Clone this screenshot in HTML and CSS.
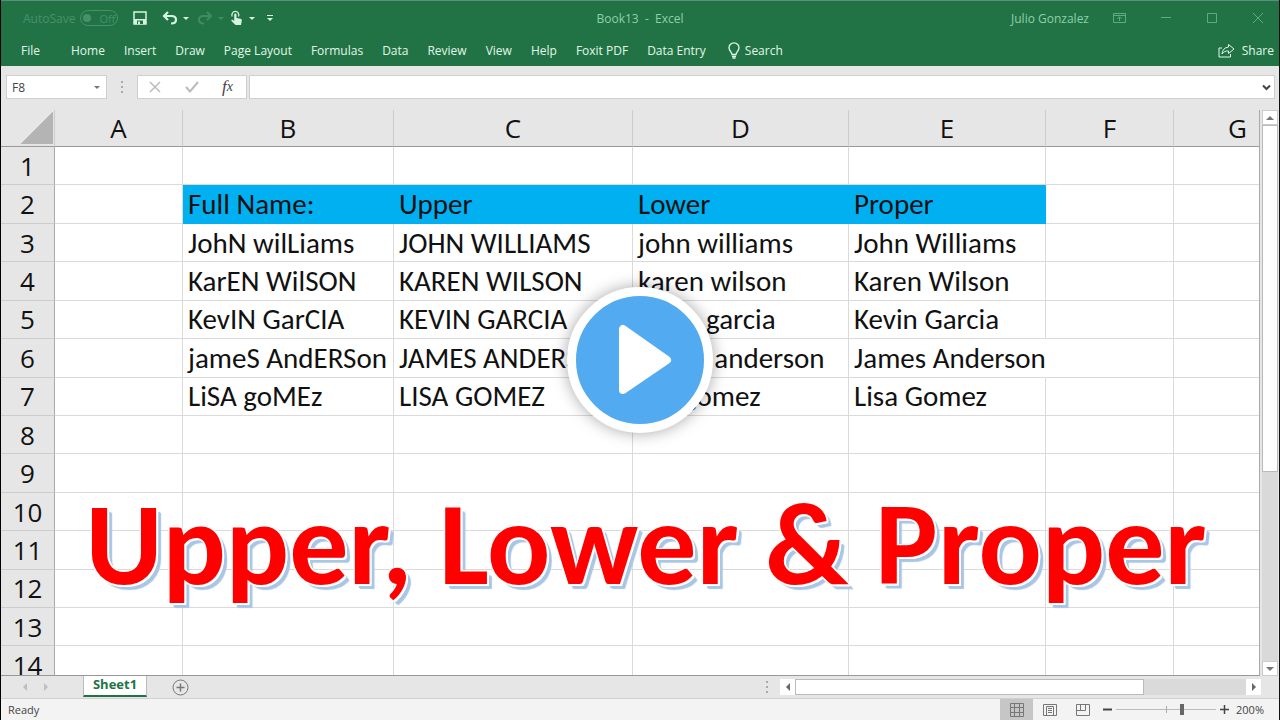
FILE: index.html
```html
<!DOCTYPE html>
<html lang="en">
<head>
  <meta charset="UTF-8" />
  <meta name="viewport" content="width=device-width, initial-scale=1.0"/>
  <title>Book13 - Excel</title>
  <link rel="stylesheet" href="styles.css">
</head>
<body>
  <div class="app">
    <header class="titlebar">
      <div class="quick-access">
        <label class="autosave">AutoSave
          <button class="switch" disabled><span class="knob"></span>Off</button>
        </label>
        <button class="save" aria-label="Save">
          <svg width="14" height="14" viewBox="0 0 14 14"><path d="M1 1h12v12H1z" fill="none" stroke="currentColor" stroke-width="1.500"/><path d="M1 8h12v5H1z" fill="currentColor"/><path d="M4 9.500h6V13H4z" fill="#217346"/><path d="M5 10.500h2V13H5z" fill="currentColor"/></svg>
        </button>
        <button class="undo" aria-label="Undo">
          <svg width="16" height="14" viewBox="0 0 16 14"><path d="M2 5h7.500c3 0 4.500 1.500 4.500 3.700S12.300 12.500 9 12.500" fill="none" stroke="currentColor" stroke-width="2.200"/><path d="M6 1 2 5l4 4" fill="none" stroke="currentColor" stroke-width="2.200"/></svg>
          <span class="caret"></span>
        </button>
        <button class="redo" aria-label="Redo" disabled>
          <svg width="16" height="14" viewBox="0 0 16 14"><path d="M14 5H6.500C3.500 5 2 6.500 2 8.700s1.700 3.800 5 3.800" fill="none" stroke="currentColor" stroke-width="2"/><path d="m10 1 4 4-4 4" fill="none" stroke="currentColor" stroke-width="2"/></svg>
          <span class="caret"></span>
        </button>
        <button class="touch" aria-label="Touch/Mouse Mode">
          <svg width="14" height="16" viewBox="0 0 14 16"><path d="M2.200 6.500a3.500 3.500 0 1 1 6.300 0" fill="none" stroke="currentColor" stroke-width="1.200"/><path d="M4.200 4.500c0-1.500 2.300-1.500 2.300 0V8l4 .8c1 .2 1.500.9 1.300 1.800l-.8 4.400H5.500L1.500 11c-.6-1 .6-1.700 1.400-1l1.300 1z" fill="currentColor"/></svg>
          <span class="caret"></span>
        </button>
        <button class="customize" aria-label="Customize Quick Access Toolbar"><span class="bar"></span><span class="caret"></span></button>
      </div>
      <h1 class="doc-title">Book13&nbsp; -&nbsp; Excel</h1>
      <div class="window-controls">
        <span class="user">Julio Gonzalez</span>
        <button aria-label="Ribbon Display Options">
          <svg width="13" height="12" viewBox="0 0 13 12"><path d="M.5 1.500h12v9H.5zM.5 3.500h12M6.500 9V5M4.500 6.800l2-2 2 2" fill="none" stroke="currentColor"/></svg>
        </button>
        <button aria-label="Minimize">
          <svg width="12" height="12" viewBox="0 0 12 12"><path d="M1 5.500h10" stroke="currentColor"/></svg>
        </button>
        <button aria-label="Maximize">
          <svg width="12" height="12" viewBox="0 0 12 12"><path d="M1.500 1.500h9v9h-9z" fill="none" stroke="currentColor"/></svg>
        </button>
        <button aria-label="Close">
          <svg width="12" height="12" viewBox="0 0 12 12"><path d="m1 1 10 10M11 1 1 11" stroke="currentColor"/></svg>
        </button>
      </div>
    </header>

    <nav class="ribbon">
      <button class="file">File</button>
      <button>Home</button>
      <button>Insert</button>
      <button>Draw</button>
      <button>Page Layout</button>
      <button>Formulas</button>
      <button>Data</button>
      <button>Review</button>
      <button>View</button>
      <button>Help</button>
      <button>Foxit PDF</button>
      <button>Data Entry</button>
      <button class="search">
        <svg width="12" height="17" viewBox="0 0 12 17"><path d="M4 12.500c0-2.500-3-3.500-3-6.700a5 5 0 0 1 10 0c0 3.200-3 4.200-3 6.700zM4 14.500h4M4.500 16.200h3" fill="none" stroke="currentColor" stroke-width="1.300"/></svg>
        Search
      </button>
      <button class="share">
        <svg width="17" height="15" viewBox="0 0 17 15"><path d="M4 5H1v9h11.500v-3" fill="none" stroke="currentColor"/><path d="M10.500 1.500 16 6l-5.500 4.500V8C7.500 7.800 5.500 8.800 4 11c.3-4 2.500-6.500 6.500-7z" fill="none" stroke="currentColor"/></svg>
        Share
      </button>
    </nav>

    <div class="formula-bar">
      <div class="name-box">
        <input type="text" value="F8" aria-label="Name Box" />
        <span class="caret"></span>
      </div>
      <span class="dots"></span>
      <div class="formula-buttons">
        <button class="muted" aria-label="Cancel">
          <svg width="12" height="12" viewBox="0 0 12 12"><path d="m1 1 10 10M11 1 1 11" stroke="currentColor" stroke-width="1.500"/></svg>
        </button>
        <button class="muted" aria-label="Enter">
          <svg width="14" height="12" viewBox="0 0 14 12"><path d="m1 6 4 4.500L13 1" fill="none" stroke="currentColor" stroke-width="2"/></svg>
        </button>
        <button class="fx" aria-label="Insert Function">f<sub>x</sub></button>
      </div>
      <div class="formula-input">
        <input type="text" aria-label="Formula Bar" />
        <svg width="9" height="7" viewBox="0 0 9 7"><path d="m1 1.500 3.500 3.500L8 1.500" fill="none" stroke="currentColor" stroke-width="2"/></svg>
      </div>
    </div>

    <main class="workspace">
      <div class="sheet">
        <table>
          <colgroup>
            <col class="col-num"><col class="col-a"><col class="col-b"><col class="col-c"><col class="col-d"><col class="col-e"><col class="col-f"><col class="col-g">
          </colgroup>
          <thead>
            <tr><th class="corner"></th><th>A</th><th>B</th><th>C</th><th>D</th><th>E</th><th>F</th><th>G</th></tr>
          </thead>
          <tbody>
            <tr><th>1</th><td></td><td></td><td></td><td></td><td></td><td></td><td></td></tr>
            <tr class="heading"><th>2</th><td></td><td>Full Name:</td><td>Upper</td><td>Lower</td><td>Proper</td><td></td><td></td></tr>
            <tr><th>3</th><td></td><td>JohN wilLiams</td><td>JOHN WILLIAMS</td><td>john williams</td><td>John Williams</td><td></td><td></td></tr>
            <tr><th>4</th><td></td><td>KarEN WilSON</td><td>KAREN WILSON</td><td>karen wilson</td><td>Karen Wilson</td><td></td><td></td></tr>
            <tr><th>5</th><td></td><td>KevIN GarCIA</td><td>KEVIN GARCIA</td><td>kevin garcia</td><td>Kevin Garcia</td><td></td><td></td></tr>
            <tr><th>6</th><td></td><td>jameS AndERSon</td><td>JAMES ANDERSON</td><td>james anderson</td><td class="spill">James Anderson</td><td></td><td></td></tr>
            <tr><th>7</th><td></td><td>LiSA goMEz</td><td>LISA GOMEZ</td><td>lisa gomez</td><td>Lisa Gomez</td><td></td><td></td></tr>
            <tr><th>8</th><td></td><td></td><td></td><td></td><td></td><td></td><td></td></tr>
            <tr><th>9</th><td></td><td></td><td></td><td></td><td></td><td></td><td></td></tr>
            <tr><th>10</th><td></td><td></td><td></td><td></td><td></td><td></td><td></td></tr>
            <tr><th>11</th><td></td><td></td><td></td><td></td><td></td><td></td><td></td></tr>
            <tr><th>12</th><td></td><td></td><td></td><td></td><td></td><td></td><td></td></tr>
            <tr><th>13</th><td></td><td></td><td></td><td></td><td></td><td></td><td></td></tr>
            <tr><th>14</th><td></td><td></td><td></td><td></td><td></td><td></td><td></td></tr>
          </tbody>
        </table>
        <div class="banner">Upper, Lower &amp; Proper</div>
      </div>
      <div class="vscroll">
        <button aria-label="Scroll up"><span class="arrow up"></span></button>
        <div class="thumb"></div>
        <div class="track"></div>
        <button aria-label="Scroll down"><span class="arrow down"></span></button>
      </div>
    </main>

    <div class="sheet-bar">
      <div class="sheet-nav">
        <button aria-label="Previous sheet" disabled><span class="arrow left"></span></button>
        <button aria-label="Next sheet" disabled><span class="arrow right"></span></button>
      </div>
      <button class="sheet-tab">Sheet1</button>
      <button class="add-sheet" aria-label="New sheet">
        <svg width="17" height="17" viewBox="0 0 17 17"><circle cx="8.500" cy="8.500" r="7.500" fill="none" stroke="currentColor"/><path d="M8.500 4.500v8M4.500 8.500h8" stroke="currentColor" stroke-width="1.500"/></svg>
      </button>
      <span class="dots"></span>
      <div class="hscroll">
        <button aria-label="Scroll left"><span class="arrow left"></span></button>
        <div class="thumb"></div>
        <div class="track"></div>
        <button aria-label="Scroll right"><span class="arrow right"></span></button>
      </div>
    </div>

    <footer class="status-bar">
      <span class="ready">Ready</span>
      <button class="view active" aria-label="Normal">
        <svg width="14" height="14" viewBox="0 0 14 14"><path d="M.5.5h13v13H.5zM.5 4.500h13M.5 9.500h13M4.500.5v13M9.500.5v13" fill="none" stroke="currentColor"/></svg>
      </button>
      <button class="view" aria-label="Page Layout view">
        <svg width="14" height="14" viewBox="0 0 14 14"><path d="M.5 1.500h13v11H.5zM3.500 3.500h7v9h-7zM5 5.500h4M5 7.500h4M5 9.500h4" fill="none" stroke="currentColor"/></svg>
      </button>
      <button class="view" aria-label="Page Break Preview">
        <svg width="14" height="14" viewBox="0 0 14 14"><path d="M.5 1.500h13v11H.5zM4.500 1.500v6M9.500 1.500v6M.5 7.500h9" fill="none" stroke="currentColor"/></svg>
      </button>
      <button class="zoom-btn" aria-label="Zoom out"><svg width="9" height="9" viewBox="0 0 9 9"><path d="M0 4.500h9" stroke="currentColor" stroke-width="2"/></svg></button>
      <input type="range" min="0" max="100" value="67" aria-label="Zoom" />
      <button class="zoom-btn" aria-label="Zoom in"><svg width="9" height="9" viewBox="0 0 9 9"><path d="M0 4.500h9M4.500 0v9" stroke="currentColor" stroke-width="1.500"/></svg></button>
      <span class="zoom-level">200%</span>
    </footer>

    <button class="play" aria-label="Play video">
      <svg width="54" height="72" viewBox="0 0 54 72"><path d="M5 5v61l44-30z" fill="#fff" stroke="#fff" stroke-width="8" stroke-linejoin="round"/></svg>
    </button>
  </div>
</body>
</html>
```
FILE: styles.css
```css
* {
  box-sizing: border-box;
}

body {
  margin: 0;
  background: #e6e6e6;
  font-family: "Segoe UI", "Open Sans", sans-serif;
  font-size: 12px;
  color: #444;
}

button {
  display: flex;
  align-items: center;
  justify-content: center;
  padding: 0;
  border: none;
  background: none;
  color: inherit;
  font: inherit;
}

input {
  min-width: 0;
  border: none;
  outline: none;
  background: none;
  color: inherit;
  font: inherit;
}

svg {
  flex-shrink: 0;
}

.app {
  position: relative;
  display: flex;
  flex-direction: column;
  height: 100vh;
  overflow: hidden;
  border-left: 1px solid #000;
  border-right: 1px solid #111;
}

.caret {
  border: 3px solid transparent;
  border-top-color: currentColor;
  border-bottom: none;
}

.dots {
  width: 2px;
  height: 12px;
  background: repeating-linear-gradient(#aaa 0 2px, transparent 2px 5px);
}

/* title bar */
.titlebar {
  display: grid;
  grid-template-columns: 1fr auto 1fr;
  align-items: center;
  height: 35px;
  flex-shrink: 0;
  border-top: 1px solid #5b8f80;
  background: #217346;
  color: #d5f5e0;
}

.quick-access {
  display: flex;
  align-items: center;
  padding-left: 22px;
}

.quick-access button {
  gap: 5px;
}

.autosave {
  display: flex;
  align-items: center;
  gap: 5px;
  margin-right: 15px;
  color: #48906a;
}

.quick-access .switch {
  gap: 8px;
  width: 38px;
  height: 16px;
  border: 1px solid #48906a;
  border-radius: 8px;
  font-size: 11px;
}

.knob {
  width: 8px;
  height: 8px;
  border-radius: 50%;
  background: #48906a;
}

.save {
  margin-right: 15px;
}

.undo {
  margin-right: 8px;
}

.redo {
  margin-right: 6px;
  color: #438b64;
}

.touch {
  margin-right: 12px;
}

.quick-access .customize {
  flex-direction: column;
  gap: 2px;
}

.customize .bar {
  width: 6px;
  height: 1px;
  background: currentColor;
}

.doc-title {
  margin: 0;
  font-size: 12px;
  font-weight: 400;
  color: #8fd0a8;
}

.window-controls {
  display: flex;
  align-items: center;
  justify-content: flex-end;
  gap: 34px;
  padding-right: 15px;
  color: #62aa80;
}

.user {
  margin-right: -10px;
  color: #8fd0a8;
}

/* ribbon tabs */
.ribbon {
  display: flex;
  align-items: center;
  gap: 19px;
  height: 31px;
  flex-shrink: 0;
  padding: 0 5px 0 20px;
  background: #217346;
  color: #e2f8e8;
}

.file {
  margin-right: 12px;
}

.search {
  gap: 5px;
  margin-left: 3px;
}

.share {
  gap: 7px;
  margin-left: auto;
}

/* formula bar */
.formula-bar {
  display: flex;
  align-items: center;
  height: 44px;
  flex-shrink: 0;
  padding: 0 4px 2px 5px;
}

.name-box,
.formula-buttons,
.formula-input {
  display: flex;
  align-items: center;
  height: 24px;
  border: 1px solid #cfcfcf;
  background: #fff;
}

.name-box {
  width: 101px;
  padding: 0 6px 0 5px;
}

.name-box .caret {
  color: #777;
}

.name-box input {
  flex: 1;
  padding: 0;
}

.formula-bar .dots {
  margin: 0 14px;
}

.formula-buttons {
  justify-content: space-between;
  width: 110px;
  margin-right: 2px;
  padding: 0 13px 0 11px;
}

.muted {
  color: #bbb;
}

.fx {
  font-family: "Liberation Serif", serif;
  font-size: 17px;
  font-style: italic;
}

.fx sub {
  font-size: 14px;
}

.formula-input {
  flex: 1;
  padding-right: 3px;
}

.formula-input input {
  flex: 1;
}

/* sheet */
.workspace {
  display: flex;
  flex: 1;
  min-height: 0;
}

.sheet {
  position: relative;
  flex: 1;
  min-width: 0;
  overflow: hidden;
  border-right: 1px solid #aaa;
  border-bottom: 1px solid #999;
}

table {
  width: 1301px;
  height: calc(100% + 10px);
  table-layout: fixed;
  border-spacing: 0;
  background: #fff;
  color: #111;
}

.col-num { width: 54px; }
.col-a { width: 128px; }
.col-b { width: 211px; }
.col-c { width: 239px; }
.col-d { width: 216px; }
.col-e { width: 197px; }
.col-f { width: 128px; }
.col-g { width: 128px; }

th,
td {
  padding: 0;
  border-right: 1px solid #dadada;
  border-bottom: 1px solid #dadada;
  white-space: nowrap;
  line-height: 32px;
}

th {
  background: #e6e6e6;
  font-size: 26px;
  font-weight: 400;
}

thead th {
  height: 37px;
  border-right-color: #ccc;
  border-bottom-color: #999;
}

tbody th {
  border-right-color: #aaa;
  border-bottom-color: #ccc;
}

.corner {
  background: linear-gradient(135deg, transparent 50%, #b4b4b4 50%) 20px 2px / 32px 32px no-repeat #e6e6e6;
}

td {
  padding-left: 5px;
  font-family: Calibri, Lato, sans-serif;
  font-size: 29px;
}

.heading td:nth-child(n+3):nth-child(-n+6) {
  border-color: #00b0f0;
  background: #00b0f0;
}

.spill {
  border-right-color: transparent;
}

.banner {
  position: absolute;
  bottom: 71px;
  left: 0;
  width: 100%;
  padding-left: 32px;
  font-family: Calibri, Lato, sans-serif;
  font-size: 118px;
  font-weight: 700;
  line-height: 120px;
  text-align: center;
  white-space: nowrap;
  color: #f00;
  text-shadow: -1px -1px 0 #fff, 1px -1px 0 #fff, -1px 1px 0 #fff, 2px 2px 0 #fff, 2px 0 0 #fff, 0 2px 0 #fff,
    4px 4px 1px #a9c6e4, 5px 5px 1px #a9c6e4;
}

/* scrollbars */
.arrow {
  border: 4px solid transparent;
}

.up { border-top: none; border-bottom-color: #777; }
.down { border-bottom: none; border-top-color: #777; }
.left { border-left: none; border-right-color: #666; }
.right { border-right: none; border-left-color: #666; }

.vscroll {
  display: flex;
  flex-direction: column;
  width: 19px;
  padding: 0 1px 0 2px;
}

.vscroll button {
  height: 15px;
  border: 1px solid #ccc;
  background: #fff;
}

.vscroll .thumb {
  flex: 347;
  border: 1px solid #bbb;
  background: #fff;
}

.vscroll .track {
  flex: 190;
  background: #d9d9d9;
}

.sheet-bar {
  display: flex;
  height: 22px;
  flex-shrink: 0;
}

.sheet-nav {
  display: flex;
  gap: 17px;
  width: 82px;
  padding-left: 22px;
}

.sheet-nav button {
  opacity: 0.3;
}

.sheet-tab {
  width: 64px;
  height: 21px;
  padding-bottom: 3px;
  border: 1px solid #bbb;
  border-top: none;
  border-bottom: 2px solid #217346;
  background: #fff;
  color: #217346;
  font-size: 13px;
  font-weight: 700;
}

.add-sheet {
  margin-left: 25px;
  color: #777;
}

.sheet-bar .dots {
  align-self: center;
  margin-left: auto;
  margin-right: 12px;
}

.hscroll {
  display: flex;
  width: calc(38% - 5px);
  height: 16px;
  margin: 3px 18px 0 0;
}

.hscroll button {
  width: 15px;
  background: #fff;
}

.hscroll .thumb {
  flex: 348;
  border: 1px solid #bbb;
  background: #fff;
}

.hscroll .track {
  flex: 102;
  background: #dadada;
}

/* status bar */
.status-bar {
  display: flex;
  align-items: stretch;
  height: 22px;
  flex-shrink: 0;
  padding-right: 15px;
  border-top: 1px solid #d0d0d0;
  background: #f3f3f3;
  font-size: 11px;
  line-height: 21px;
}

.ready {
  margin-right: auto;
  padding-left: 7px;
}

.view {
  width: 33px;
  color: #777;
}

.active {
  background: #c6c6c6;
}

.zoom-btn {
  width: 16px;
}

input[type="range"] {
  width: 100px;
  margin: 0 0 0 1px;
  appearance: none;
  background: linear-gradient(#aaa, #aaa) 50px 50% / 1px 7px no-repeat,
    linear-gradient(#bbb, #bbb) 0 50% / 100% 1px no-repeat;
}

input[type="range"]::-webkit-slider-thumb {
  appearance: none;
  width: 4px;
  height: 11px;
  background: #666;
}

.zoom-level {
  margin-left: 4px;
}

/* video play overlay */
.play {
  position: absolute;
  top: 50%;
  left: 50%;
  width: 146px;
  height: 146px;
  padding-left: 10px;
  transform: translate(-50%, -50%);
  border: 9px solid #fff;
  border-radius: 50%;
  background: #52aaf0;
  box-shadow: 0 0 16px rgba(0, 0, 0, 0.35);
}
```
